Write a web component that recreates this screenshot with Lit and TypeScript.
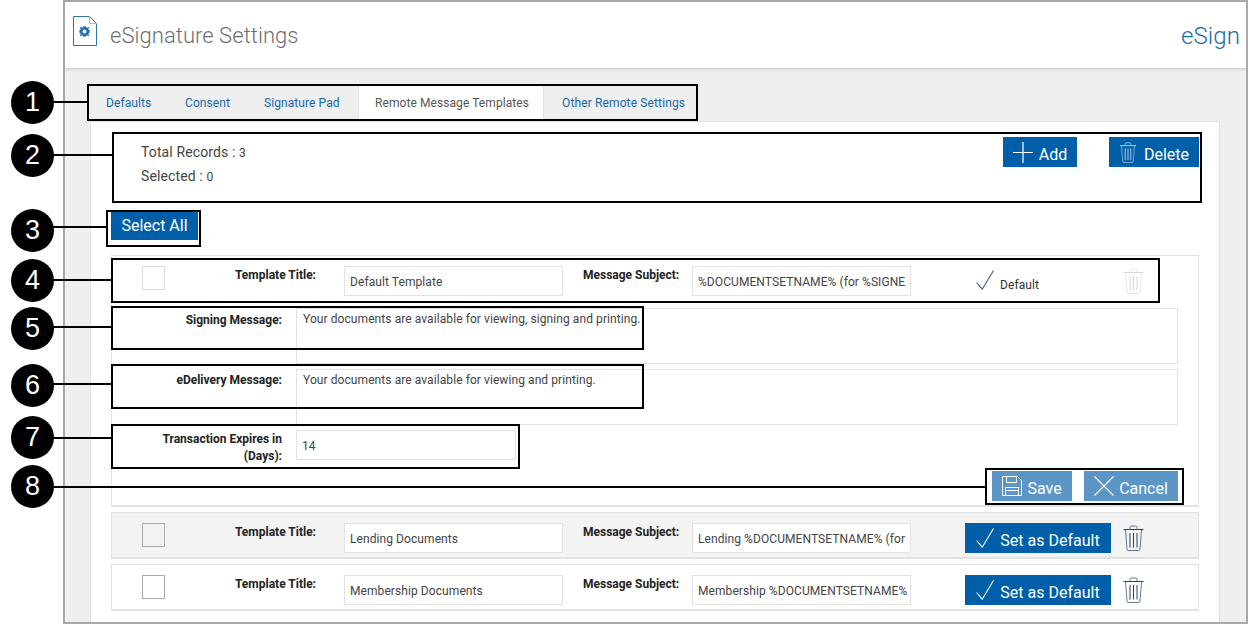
import { LitElement, html, css, svg } from "lit";
import { customElement } from "lit/decorators.js";

const trash = (cls: string) => html`<svg class=${cls} viewBox="0 0 21 26" fill="none" stroke="currentColor" stroke-width="1">
  <path class="soft-line" d="M7 4.500V2.500Q7 1 8.500 1H12.500Q14 1 14 2.500V4.500"/>
  <path d="M0.500 4.500H20.500"/>
  <path class="soft-line" d="M2.500 5L4 24Q4.100 25.500 5.500 25.500H15.500Q16.900 25.500 17 24L18.500 5"/>
  <path d="M7 8V22.500M10.500 8V22.500M14 8V22.500"/>
</svg>`;

const check = html`<svg class="ic-check" viewBox="0 0 18 20" fill="none" stroke="currentColor" stroke-width="1.100"><path d="M0.600 12.500L6.200 19.200L17.500 0.500"/></svg>`;

const plus = html`<svg class="ic-20" viewBox="0 0 20 21" fill="none" stroke="currentColor" stroke-width="1.200"><path d="M10 0V21M0 10.500H20"/></svg>`;

const cross = html`<svg class="ic-20" viewBox="0 0 20 20" fill="none" stroke="currentColor" stroke-width="1.100"><path d="M0.500 0.500L19.500 19.500M19.500 0.500L0.500 19.500"/></svg>`;

const floppy = html`<svg class="ic-20" viewBox="0 0 20 20" fill="none" stroke="currentColor" stroke-width="1"><path d="M0.500 0.500H15.500L19.500 4.500V19.500H0.500Z"/><path d="M4.500 0.500V6.500H14.500V0.500"/><path d="M3.500 19.500V11.500H16.500V19.500M3.500 14.500H16.500"/></svg>`;

const gear = svg`<g fill="#1f6fb3" transform="translate(-0.500 -0.500)"><circle cx="12" cy="16" r="3.300" fill="none" stroke="#1f6fb3" stroke-width="2.600"/><path d="M10.800 10.800h2.400v1.700h-2.400zM10.800 19.500h2.400v1.700h-2.400zM6.800 14.800h1.700v2.400H6.800zM15.500 14.800h1.700v2.400h-1.700z"/><path d="M8 11.300l1.700 1.100-1 1.200-1.500-1.100zM16 11.300l.8 1.200-1.500 1.100-1-1.200zM8 20.700l-.8-1.200 1.500-1.100 1 1.200zM16 20.700l-1.700-1.100 1-1.200 1.500 1.100z"/></g>`;

const fileIcon = html`<svg class="file" viewBox="0 0 24 30" fill="none"><path d="M0.500 0.500H16.500L23.500 7.500V29.500H0.500Z" stroke="#2a74b0"/><path d="M16.500 0.500V7.500H23.500" stroke="#9cc0dc"/>${gear}</svg>`;

interface Row { title: string; subject: string; shaded: boolean }

const rows: Row[] = [
  { title: "Lending Documents", subject: "Lending %DOCUMENTSETNAME% (for", shaded: true },
  { title: "Membership Documents", subject: "Membership %DOCUMENTSETNAME%", shaded: false },
];

const boxes = [
  [87, 84, 611, 37], [112, 132, 1090, 71], [106, 210, 95, 37], [111, 258, 1049, 45],
  [111, 306, 533, 44], [111, 364, 533, 45], [111, 424, 409, 45], [985, 468, 199, 37],
];

const callouts = [
  { n: 1, y: 102, line: 102, end: 87 }, { n: 2, y: 155, line: 155, end: 112 },
  { n: 3, y: 230, line: 227, end: 106 }, { n: 4, y: 280, line: 280, end: 111 },
  { n: 5, y: 328, line: 327, end: 111 }, { n: 6, y: 385, line: 384, end: 111 },
  { n: 7, y: 437, line: 438, end: 111 }, { n: 8, y: 486, line: 487, end: 985 },
];

@customElement("app-root")
export class AppRoot extends LitElement {
  static styles = css`
    :host { display: block; position: relative; width: 1248px; height: 624px; overflow: hidden; background: #fff; font-family: Roboto, "Liberation Sans", sans-serif; font-size: 12px; letter-spacing: .08px; color: #333; }
    .window { box-sizing: border-box; margin-left: 63px; width: 1185px; height: 624px; border: 2px solid #a8a8a8; background: #efefef; display: flex; flex-direction: column; overflow: hidden; }
    .head { flex: none; height: 66px; background: #fff; box-shadow: 0 1px 3px rgba(0,0,0,.18); display: flex; align-items: flex-start; box-sizing: border-box; padding: 14px 6px 0 8px; position: relative; }
    .file { width: 24px; height: 30px; flex: none; }
    .title { margin: 5px 0 0 13px; font-size: 22px; letter-spacing: .05px; font-weight: 300; color: #6f6f6f; line-height: 30px; flex: 1; }
    .brand { margin-top: 5px; font-size: 24px; letter-spacing: .1px; font-weight: 300; color: #1a6cb0; line-height: 30px; }
    .body { flex: 1; min-height: 0; padding: 16px 26px 0 25px; }
    .tabs { display: flex; height: 37px; box-sizing: border-box; }
    .tab { display: flex; align-items: center; color: #1667aa; box-sizing: border-box; height: 37px; }
    .t1 { padding-left: 16px; width: 95px; }
    .t2 { width: 79px; }
    .t3 { width: 94px; }
    .t4 { width: 186px; padding-left: 16px; color: #555; background: #fff; border-left: 1px solid #e2e2e2; border-right: 1px solid #e2e2e2; }
    .t5 { padding-left: 18px; letter-spacing: .13px; }
    .panel { box-sizing: border-box; height: 520px; background: #fff; border: 1px solid #e2e2e2; padding: 15px 20px 0 20px; }
    .info { display: flex; height: 58px; margin-left: 2px; border-left: 1px solid #e6e6e6; padding-left: 27px; }
    .stats { flex: 1; font-size: 14px; letter-spacing: .12px; color: #444; line-height: 24px; margin-top: 3px; }
    .stats small { font-size: 12px; line-height: 1; letter-spacing: .08px; }
    .btn { display: flex; align-items: center; justify-content: center; box-sizing: border-box; height: 30px; background: #005fa8; color: #fff; font-size: 16px; letter-spacing: 0; flex: none; }
    .btn.soft { background: #5b96c6; }
    .tx { margin-top: 4px; }
    .add { width: 74px; gap: 6px; margin-right: 32px; }
    .del { width: 90px; gap: 7px; color: #fff; }
    .del svg { color: #b6d2ea; width: 18px; height: 21px; stroke-width: 1.200; }
    .ic-20 { width: 20px; height: 20px; flex: none; }
    .add .ic-20 { height: 21px; }
    .select { width: 87px; height: 28px; margin: 17px 0 15px 0; padding-bottom: 2px; }
    .card { box-sizing: border-box; border: 1px solid #e2e2e2; border-bottom-width: 2px; }
    .card + .card { margin-top: 5px; }
    .card.shaded { background: #f3f3f3; }
    .first { height: 252px; }
    .next { height: 47px; }
    .row { display: flex; align-items: flex-start; padding: 10px 0 0 30px; }
    .box { width: 23px; height: 24px; box-sizing: border-box; border: 1px solid #aaa; flex: none; }
    .first .box { border-color: #ddd; }
    .lab { font-weight: 700; color: #222; letter-spacing: 0; line-height: 14px; flex: none; white-space: nowrap; }
    .lab.tt { width: 151px; text-align: right; margin-top: 2px; }
    .lab.ms { width: 96px; margin: 2px 13px 0 20px; }
    .input { box-sizing: border-box; height: 30px; width: 219px; flex: none; background: #fff; border: 1px solid #e2e2e2; padding: 8px 3px 0 5px; line-height: 14px; color: #444; }
    .input span { display: block; overflow: hidden; white-space: nowrap; }
    .tt + .input { margin-left: 28px; }
    .def { width: 146px; margin-left: 54px; flex: none; display: flex; gap: 6px; padding: 4px 0 0 11px; box-sizing: border-box; color: #333; }
    .def span { margin-top: 8px; line-height: 14px; }
    .ic-check { width: 18px; height: 20px; flex: none; }
    .def .ic-check { color: #3d5e7e; }
    .set { width: 146px; margin-left: 54px; gap: 6px; }
    .trash { width: 21px; height: 26px; flex: none; margin: 2px 0 0 12px; color: #23466b; }
    .soft-line { stroke-opacity: .7; }
    .first .trash { color: #d4dadf; }
    .field { display: flex; margin: 0 20px 0 0; align-items: flex-start; }
    .field .lab { width: 170px; text-align: right; margin: 5px 14px 0 0; }
    .area { box-sizing: border-box; flex: 1; border: 1px solid #e2e2e2; height: 56px; padding: 2px 6px; line-height: 17px; color: #444; }
    .f1 { margin-top: 12px; }
    .f2 { margin-top: 5px; }
    .f2 .lab { margin-top: 4px; }
    .f3 { margin-top: 5px; }
    .f3 .lab { box-sizing: border-box; padding-left: 45px; white-space: normal; line-height: 17px; margin-top: 1px; }
    .f3 .input { width: 220px; margin: 0; }
    .actions { display: flex; justify-content: flex-end; gap: 12px; margin: 6px 20px 0 0; }
    .save { width: 80px; gap: 5px; }
    .cancel { width: 94px; gap: 5px; }
    .box-note { position: absolute; box-sizing: border-box; border: 2px solid #000; pointer-events: none; }
    .line { position: absolute; left: 53px; height: 2px; background: #000; }
    .dot { position: absolute; left: 11px; width: 43px; height: 43px; border-radius: 50%; background: #000; color: #fff; font: 27px/43px "Liberation Sans", Arial, sans-serif; letter-spacing: 0; text-align: center; }
  `;

  render() {
    return html`
      <div class="window">
        <header class="head">
          ${fileIcon}
          <div class="title">eSignature Settings</div>
          <div class="brand">eSign</div>
        </header>
        <div class="body">
          <nav class="tabs">
            <div class="tab t1">Defaults</div>
            <div class="tab t2">Consent</div>
            <div class="tab t3">Signature Pad</div>
            <div class="tab t4">Remote Message Templates</div>
            <div class="tab t5">Other Remote Settings</div>
          </nav>
          <section class="panel">
            <div class="info">
              <div class="stats">
                <div>Total Records : <small>3</small></div>
                <div>Selected : <small>0</small></div>
              </div>
              <div class="btn add">${plus}<span class="tx">Add</span></div>
              <div class="btn del">${trash("")}<span class="tx">Delete</span></div>
            </div>
            <div class="btn select">Select All</div>
            <div class="card first">
              <div class="row">
                <div class="box"></div>
                <div class="lab tt">Template Title:</div>
                <div class="input"><span>Default Template</span></div>
                <div class="lab ms">Message Subject:</div>
                <div class="input"><span>%DOCUMENTSETNAME% (for %SIGNE</span></div>
                <div class="def">${check}<span>Default</span></div>
                ${trash("trash")}
              </div>
              <div class="field f1">
                <div class="lab">Signing Message:</div>
                <div class="area">Your documents are available for viewing, signing and printing.</div>
              </div>
              <div class="field f2">
                <div class="lab">eDelivery Message:</div>
                <div class="area">Your documents are available for viewing and printing.</div>
              </div>
              <div class="field f3">
                <div class="lab">Transaction Expires in (Days):</div>
                <div class="input"><span>14</span></div>
              </div>
              <div class="actions">
                <div class="btn soft save">${floppy}<span class="tx">Save</span></div>
                <div class="btn soft cancel">${cross}<span class="tx">Cancel</span></div>
              </div>
            </div>
            ${rows.map((r) => html`
              <div class="card next ${r.shaded ? "shaded" : ""}">
                <div class="row">
                  <div class="box"></div>
                  <div class="lab tt">Template Title:</div>
                  <div class="input"><span>${r.title}</span></div>
                  <div class="lab ms">Message Subject:</div>
                  <div class="input"><span>${r.subject}</span></div>
                  <div class="btn set">${check}<span class="tx">Set as Default</span></div>
                  ${trash("trash")}
                </div>
              </div>`)}
          </section>
        </div>
      </div>
      ${boxes.map(([x, y, w, h]) => html`<div class="box-note" style="left:${x}px;top:${y}px;width:${w}px;height:${h}px"></div>`)}
      ${callouts.map((c) => html`
        <div class="line" style="top:${c.line - 1}px;width:${c.end - 53}px"></div>
        <div class="dot" style="top:${c.y - 21.5}px">${c.n}</div>`)}
    `;
  }
}
